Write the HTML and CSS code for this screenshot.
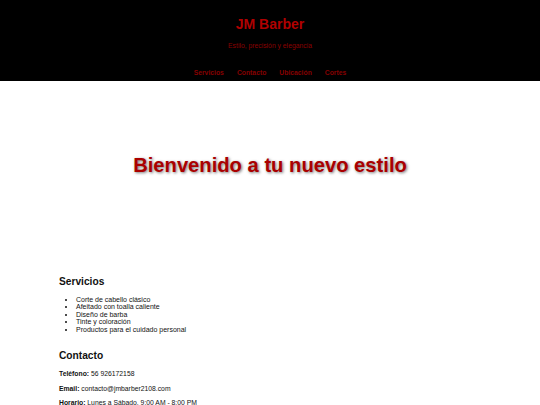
FILE: index.html
```html
<!DOCTYPE html>
<html lang="es">
<head>
<meta charset="utf-8">
<title>JM Barber</title>
<link rel="stylesheet" href="styles.css">
</head>
<body>
<header class="site-header">
  <h1 class="brand">JM Barber</h1>
  <p class="tagline">Estilo, precisión y elegancia</p>
  <nav class="nav">
    <a href="#servicios">Servicios</a>
    <a href="#contacto">Contacto</a>
    <a href="#ubicacion">Ubicación</a>
    <a href="#cortes">Cortes</a>
  </nav>
</header>
<section class="hero">
  <h2 class="hero-title">Bienvenido a tu nuevo estilo</h2>
</section>
<section class="block block-services" id="servicios">
  <h2 class="block-title">Servicios</h2>
  <ul class="services">
    <li>Corte de cabello clásico</li>
    <li>Afeitado con toalla caliente</li>
    <li>Diseño de barba</li>
    <li>Tinte y coloración</li>
    <li>Productos para el cuidado personal</li>
  </ul>
</section>
<section class="block block-contact" id="contacto">
  <h2 class="block-title">Contacto</h2>
  <p class="info"><strong>Teléfono:</strong> 56 926172158</p>
  <p class="info"><strong>Email:</strong> contacto@jmbarber2108.com</p>
  <p class="info"><strong>Horario:</strong> Lunes a Sábado, 9:00 AM - 8:00 PM</p>
</section>
</body>
</html>
```
FILE: styles.css
```css
html, body {
  margin: 0;
  padding: 0;
  background: #fff;
  font-family: "Liberation Sans", Arial, sans-serif;
  color: #111;
}

.site-header {
  background: #000;
  text-align: center;
  height: 81px;
  box-sizing: border-box;
  padding-top: 16px;
}

.brand {
  margin: 0;
  font-size: 14px;
  line-height: 17px;
  font-weight: bold;
  color: #b00000;
}

.tagline {
  margin: 8.7px 0 0;
  font-size: 6.8px;
  line-height: 8px;
  color: #8b0000;
}

.nav {
  margin-top: 19px;
  display: flex;
  justify-content: center;
  gap: 13px;
  font-size: 6.8px;
  line-height: 8px;
}

.nav a {
  color: #850000;
  font-weight: bold;
  text-decoration: none;
}

.hero {
  height: 168px;
  display: flex;
  align-items: center;
  justify-content: center;
}

.hero-title {
  margin: 0;
  font-size: 20.2px;
  line-height: 24px;
  font-weight: bold;
  color: #aa0000;
  text-shadow: 1px 1px 3px rgba(0, 0, 0, 0.55);
}

.block {
  padding: 0 59px;
}

.block-services {
  margin-top: 27px;
}

.block-contact {
  margin-top: 16.5px;
}

.block-title {
  margin: 0;
  font-size: 10.2px;
  line-height: 12px;
  font-weight: bold;
}

.services {
  margin: 7.5px 0 0;
  padding-left: 17px;
  font-size: 7px;
  line-height: 7.6px;
}

.info {
  margin: 6.6px 0 0;
  font-size: 6.8px;
  line-height: 7.6px;
}

.block-title + .info {
  margin-top: 8.5px;
}
```
